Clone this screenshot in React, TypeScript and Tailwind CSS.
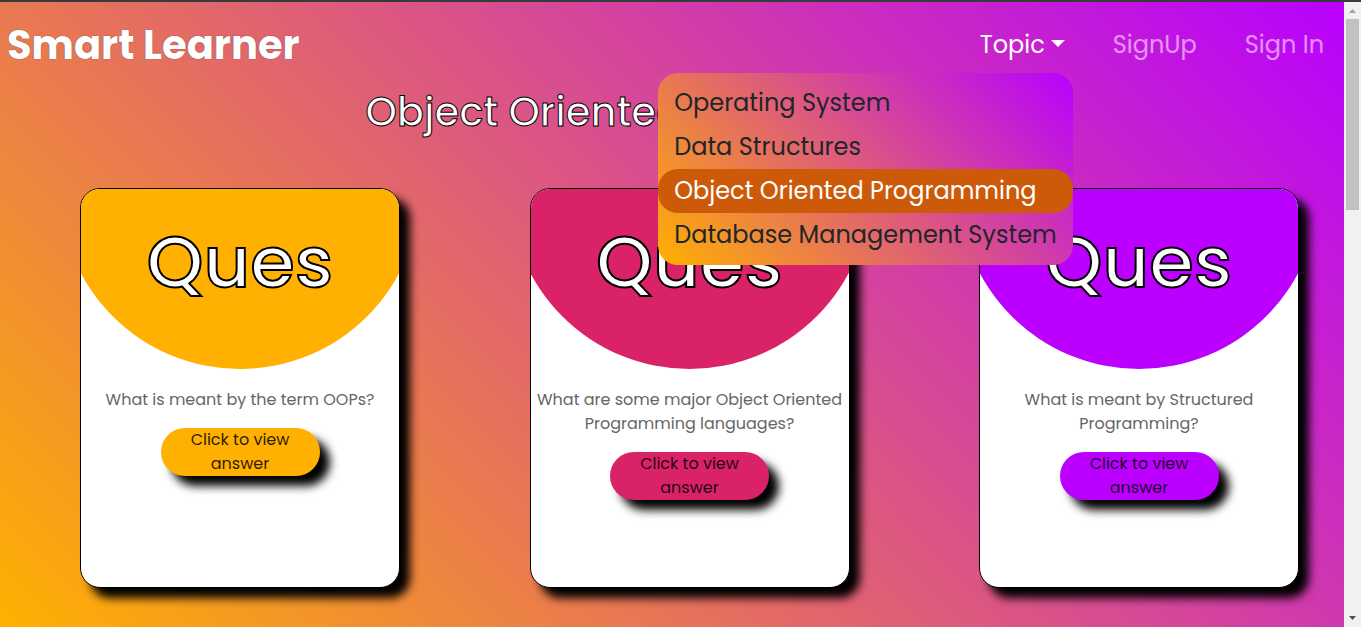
import { useState } from "react";

type Question = {
  text: string;
  fill: string;
};

const topics = [
  "Operating System",
  "Data Structures",
  "Object Oriented Programming",
  "Database Management System",
];

const questions: Question[] = [
  { text: "What is meant by the term OOPs?", fill: "bg-[#ffb000]" },
  {
    text: "What are some major Object Oriented Programming languages?",
    fill: "bg-[#da2268]",
  },
  { text: "What is meant by Structured Programming?", fill: "bg-[#bb00ff]" },
];

function Navbar({
  topic,
  onSelect,
}: {
  topic: string;
  onSelect: (topic: string) => void;
}) {
  const [open, setOpen] = useState(true);
  return (
    <nav className="flex items-center justify-between pt-[13px] pr-3 pl-[7px]">
      <a
        href="#home"
        className="text-[40px] leading-[60px] font-bold whitespace-nowrap text-white [text-shadow:0_0_1px_#444]"
      >
        Smart Learner
      </a>
      <ul className="flex items-center gap-8 text-2xl leading-9">
        <li className="relative">
          <button
            type="button"
            aria-expanded={open}
            onClick={() => setOpen(!open)}
            className="flex items-center gap-[6px] px-2 py-2 text-white"
          >
            Topic
            <svg
              width="14"
              height="7"
              viewBox="0 0 14 7"
              aria-hidden="true"
              className="mb-[3px]"
            >
              <path d="M0 0h14L7 7z" fill="currentColor" />
            </svg>
          </button>
          {open && (
            <ul className="absolute top-full right-0 z-10 mt-[2px] rounded-[20px] bg-[linear-gradient(45deg,#ffb100,#b900ff)] py-2">
              {topics.map((name) => (
                <li key={name}>
                  <button
                    type="button"
                    onClick={() => onSelect(name)}
                    className={
                      name === topic
                        ? "w-full rounded-[20px] bg-[#cc5a09] px-4 py-1 text-left whitespace-nowrap text-white"
                        : "w-full px-4 py-1 text-left whitespace-nowrap text-[#212529]"
                    }
                  >
                    {name}
                  </button>
                </li>
              ))}
            </ul>
          )}
        </li>
        <li>
          <a href="#signup" className="block px-2 py-2 text-white/55">
            SignUp
          </a>
        </li>
        <li>
          <a href="#signin" className="block px-2 py-2 text-white/55">
            Sign In
          </a>
        </li>
      </ul>
    </nav>
  );
}

function QuestionCard({ text, fill }: Question) {
  return (
    <article className="h-[400px] w-[320px] shrink-0 overflow-hidden rounded-[20px] border border-black bg-white text-center shadow-[10px_10px_10px_#000]">
      <div
        className={`${fill} flex h-[180px] items-center justify-center pb-[34px] [clip-path:circle(180px_at_center_0)]`}
      >
        <h2 className="text-[72px] leading-none font-medium text-white [-webkit-text-stroke:2px_#000]">
          Ques
        </h2>
      </div>
      <p className="mt-[19px] px-1 text-base leading-6 text-[#666]">{text}</p>
      <button
        type="button"
        className={`${fill} mt-4 w-1/2 rounded-3xl px-6 text-base leading-6 text-black/85 shadow-[10px_10px_10px_#000]`}
      >
        Click to view answer
      </button>
    </article>
  );
}

function ScrollTrack() {
  return (
    <div
      aria-hidden="true"
      className="flex w-[17px] shrink-0 flex-col items-center bg-[#f1f1f1]"
    >
      <svg width="17" height="17" viewBox="0 0 17 17">
        <path d="M5 11h7L8.500 7z" fill="#a3a3a3" />
      </svg>
      <div className="h-[191px] w-[13px] bg-[#c1c1c1]" />
      <svg width="17" height="17" viewBox="0 0 17 17" className="mt-auto">
        <path d="M5 6h7L8.500 10z" fill="#505050" />
      </svg>
    </div>
  );
}

export default function App() {
  const [topic, setTopic] = useState("Object Oriented Programming");
  return (
    <div className="flex h-screen overflow-hidden border-t-2 border-[#3a3a3a] font-[Poppins,Inter,sans-serif]">
      <div className="min-w-0 flex-1 overflow-hidden bg-[linear-gradient(45deg,#ffb100,#b900ff)]">
        <Navbar topic={topic} onSelect={setTopic} />
        <h1 className="mt-[7px] pr-1 text-center text-[40px] leading-[60px] font-medium text-white [-webkit-text-stroke:1px_#000]">
          {topic}
        </h1>
        <main className="mt-[46px] flex justify-between pr-[45px] pl-20">
          {questions.map((question) => (
            <QuestionCard key={question.text} {...question} />
          ))}
        </main>
      </div>
      <ScrollTrack />
    </div>
  );
}
